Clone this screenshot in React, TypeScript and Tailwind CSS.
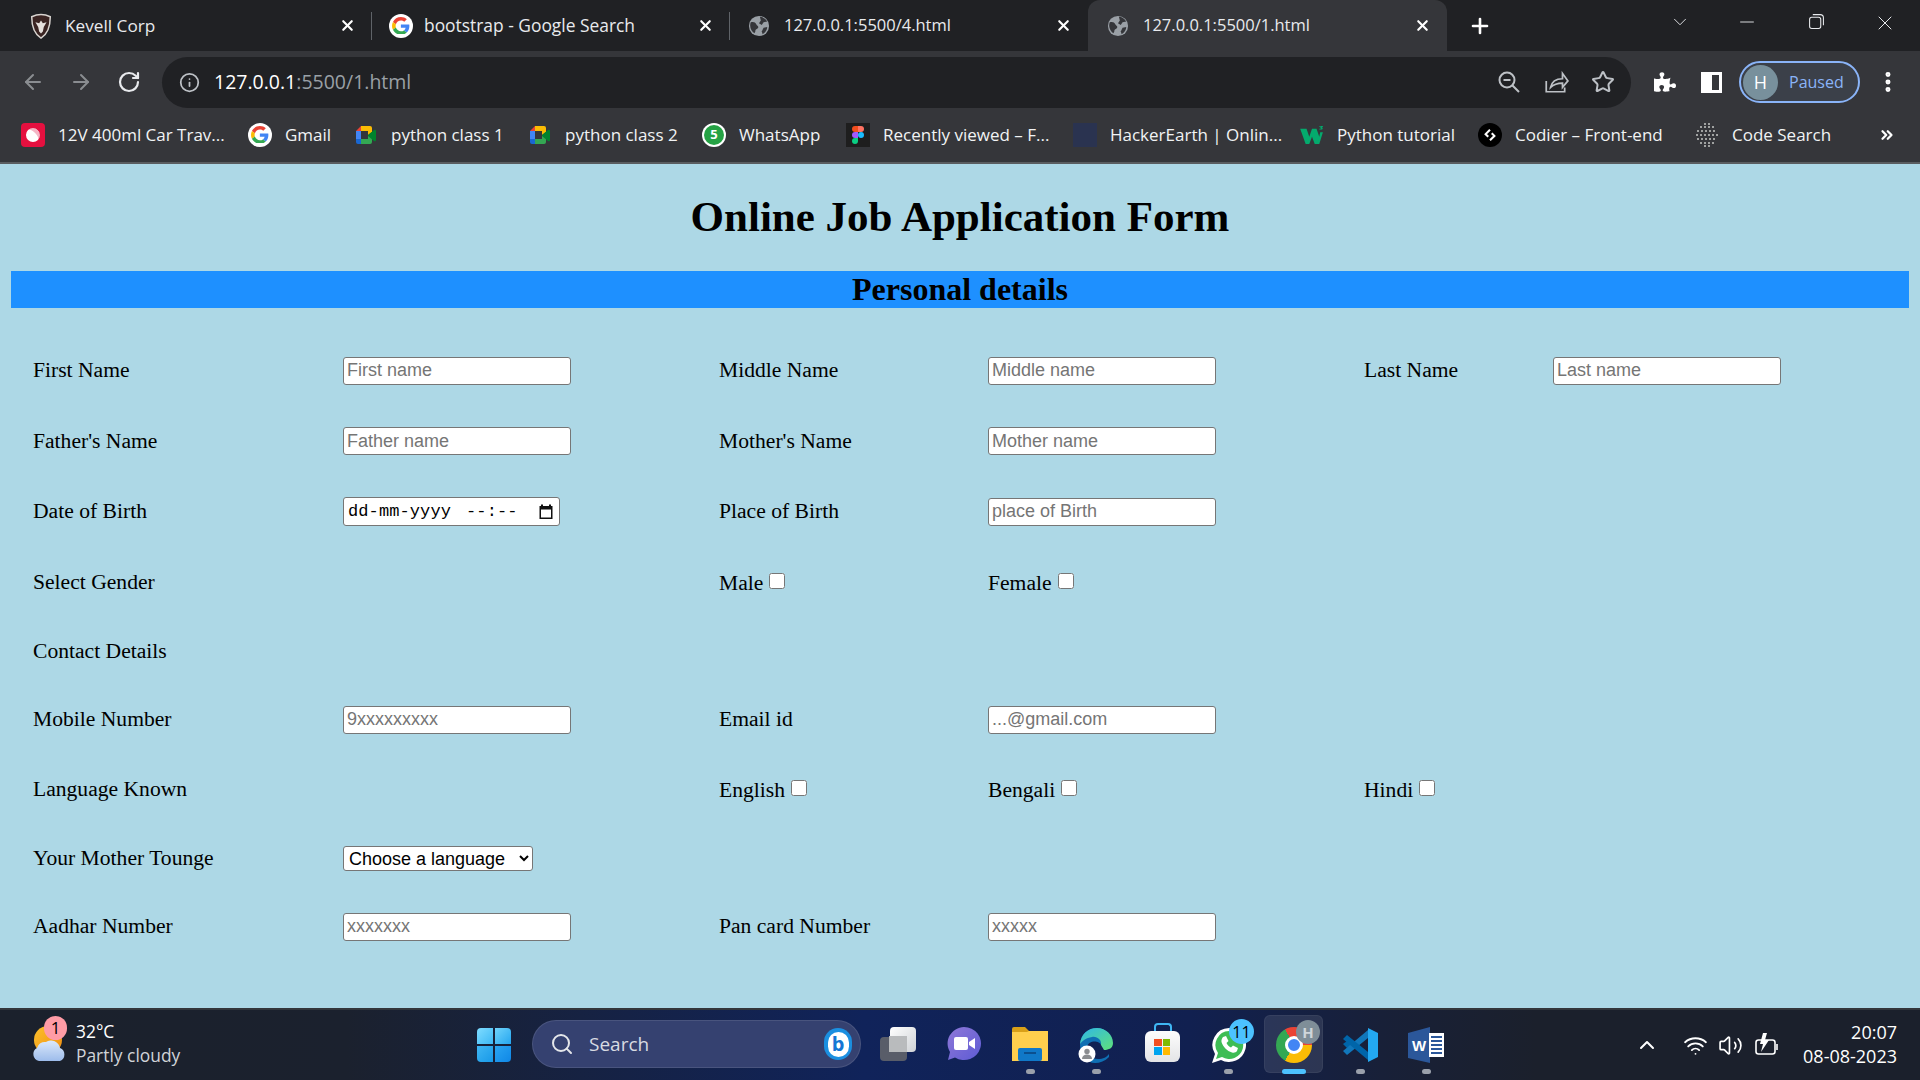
import React from 'react';
import {
  ArrowLeft, ArrowRight, RotateCw, Info, Star, MoreVertical, ChevronUp, ChevronDown,
  ChevronsRight, X, Plus, Minus, Search, Wifi, Volume2,
} from 'lucide-react';
import { FaPuzzlePiece } from 'react-icons/fa';

const Chrome = '[font-family:"Open_Sans","Noto_Sans",sans-serif]';

const GoogleG = ({ size = 24 }: { size?: number }) => (
  <div className="rounded-full bg-white flex items-center justify-center shrink-0" style={{ width: size, height: size }}>
    <svg viewBox="0 0 48 48" width={size * 0.74} height={size * 0.74}>
      <path fill="#EA4335" d="M24 9.5c3.54 0 6.71 1.22 9.21 3.6l6.85-6.85C35.9 2.38 30.47 0 24 0 14.62 0 6.51 5.38 2.56 13.22l7.98 6.19C12.43 13.72 17.74 9.5 24 9.5z" />
      <path fill="#4285F4" d="M46.98 24.55c0-1.57-.15-3.09-.38-4.55H24v9.02h12.94c-.58 2.96-2.26 5.48-4.78 7.18l7.73 6c4.51-4.18 7.09-10.36 7.09-17.65z" />
      <path fill="#FBBC05" d="M10.53 28.59c-.48-1.45-.76-2.99-.76-4.59s.27-3.14.76-4.59l-7.98-6.19C.92 16.46 0 20.12 0 24c0 3.88.92 7.54 2.56 10.78l7.97-6.19z" />
      <path fill="#34A853" d="M24 48c6.48 0 11.93-2.13 15.89-5.81l-7.73-6c-2.15 1.45-4.92 2.3-8.16 2.3-6.26 0-11.57-4.22-13.47-9.91l-7.98 6.19C6.51 42.62 14.62 48 24 48z" />
    </svg>
  </div>
);

const Globe = () => (
  <svg viewBox="0 0 24 24" width="22" height="22" className="shrink-0">
    <circle cx="12" cy="12" r="11" fill="#9aa0a6" />
    <path fill="#35363a" d="M3 8c3-1 5 0 6 2s3 2 2 4-3 1-3 4l-1 2C4 18 1 13 3 8zM13 2c3 0 6 2 8 5l-4 1-2 3-3-2 2-3z" />
    <path fill="#35363a" d="M17 14l4-1c0 3-2 6-5 8l-1-3z" />
  </svg>
);

const KevellLogo = () => (
  <svg viewBox="0 0 24 28" width="24" height="26" className="shrink-0">
    <path fill="#3a2422" stroke="#d8d4d0" strokeWidth="1.6" d="M2 4c6-3 14-3 20 0 0 10-2 18-10 23C4 22 2 14 2 4z" />
    <path fill="#e5e0dc" d="M12 8l2 3 4-1-3 5-1 5-2 2-2-2-1-5-3-5 4 1z" />
  </svg>
);

const MeetIcon = () => (
  <svg viewBox="0 0 24 24" width="24" height="24" className="shrink-0">
    <path fill="#ea4335" d="M7 3L2 8h5z" />
    <path fill="#fbbc04" d="M7 3h9a2 2 0 0 1 2 2v4l-4 3V8H7z" />
    <path fill="#4285f4" d="M2 8h5v8H2z" />
    <path fill="#1967d2" d="M2 16h5v5H4a2 2 0 0 1-2-2z" />
    <path fill="#34a853" d="M7 16h7v-4l4 3v4a2 2 0 0 1-2 2H7z" />
    <path fill="#00832d" d="M14 12l6-5c1-.8 2 0 2 1v9c0 1-1 1.7-2 1l-6-5z" />
  </svg>
);

const FigmaIcon = () => (
  <div className="w-6 h-6 bg-[#1e1e1e] flex items-center justify-center shrink-0">
    <svg viewBox="0 0 12 18" width="12" height="18">
      <path fill="#f24e1e" d="M3 0h3v6H3a3 3 0 0 1 0-6z" />
      <path fill="#ff7262" d="M6 0h3a3 3 0 0 1 0 6H6z" />
      <path fill="#a259ff" d="M3 6h3v6H3a3 3 0 0 1 0-6z" />
      <circle cx="9" cy="9" r="3" fill="#1abcfe" />
      <path fill="#0acf83" d="M3 12h3v3a3 3 0 1 1-3-3z" />
    </svg>
  </div>
);

const W3Icon = () => (
  <svg viewBox="0 0 26 22" width="24" height="20" className="shrink-0">
    <path fill="#04aa6d" d="M0 4h7l3 9 3-9h5l3 9 1-5h3l-4 13h-5l-3-8-3 8H6z" />
    <path fill="#04aa6d" d="M21 1h4v1l-1 1 1 1-1 1h-3v-1h2v-.5h-1v-1h1V2h-2z" />
  </svg>
);

const CodeSearchIcon = () => {
  const dots = [
    [10, 1], [14, 1], [6, 4], [10, 4], [14, 4], [18, 4], [3, 8], [7, 8], [11, 8], [15, 8], [19, 8], [2, 12], [6, 12], [10, 12], [14, 12], [18, 12], [22, 12],
    [3, 16], [7, 16], [11, 16], [15, 16], [19, 16], [6, 20], [10, 20], [14, 20], [18, 20], [10, 23], [14, 23],
  ];
  return (
    <svg viewBox="0 0 24 24" width="24" height="24" className="shrink-0">
      {dots.map(([x, y]) => <circle key={`${x}-${y}`} cx={x} cy={y} r="1" fill="#c4c7c5" />)}
    </svg>
  );
};

const bookmarks: { icon: React.ReactNode; label: string; width: string }[] = [
  {
    icon: (
      <div className="w-6 h-6 rounded bg-[#e5103f] flex items-center justify-center shrink-0">
        <div className="w-3.5 h-3.5 rounded-full bg-white rotate-45 border-t-4 border-t-[#f5b5c5]" />
      </div>
    ),
    label: '12V 400ml Car Trav...',
    width: 'w-[227px]',
  },
  { icon: <GoogleG />, label: 'Gmail', width: 'w-[106px]' },
  { icon: <MeetIcon />, label: 'python class 1', width: 'w-[174px]' },
  { icon: <MeetIcon />, label: 'python class 2', width: 'w-[174px]' },
  {
    icon: (
      <div className="w-6 h-6 rounded-full bg-white flex items-center justify-center shrink-0">
        <div className="w-5 h-5 rounded-full bg-[#25a244] text-white text-[13px] font-bold flex items-center justify-center">5</div>
      </div>
    ),
    label: 'WhatsApp',
    width: 'w-[144px]',
  },
  { icon: <FigmaIcon />, label: 'Recently viewed – F...', width: 'w-[227px]' },
  { icon: <div className="w-6 h-6 bg-[#2a3350] shrink-0" />, label: 'HackerEarth | Onlin...', width: 'w-[227px]' },
  { icon: <W3Icon />, label: 'Python tutorial', width: 'w-[178px]' },
  {
    icon: (
      <div className="w-6 h-6 rounded-full bg-black flex items-center justify-center shrink-0">
        <svg viewBox="0 0 16 16" width="14" height="14"><path fill="none" stroke="#fff" strokeWidth="2.4" d="M8 2L3 7l3 3M8 14l5-5-3-3" /></svg>
      </div>
    ),
    label: 'Codier – Front-end',
    width: 'w-[217px]',
  },
  { icon: <CodeSearchIcon />, label: 'Code Search', width: 'w-[150px]' },
];

const tabs = [
  { icon: <KevellLogo />, label: 'Kevell Corp', cls: 'w-[372px] pl-[29px] gap-[12px] text-[17.2px]' },
  { icon: <GoogleG />, label: 'bootstrap - Google Search', cls: 'w-[358px] pl-[17px] gap-[11px] text-[17.4px]' },
  { icon: <Globe />, label: '127.0.0.1:5500/4.html', cls: 'w-[358px] pl-[18px] gap-[14px] text-[16.5px]' },
];

const TabBar = () => (
  <div className={`h-[51px] bg-[#202124] flex text-[#e8eaed] ${Chrome}`}>
    {tabs.map((t, i) => (
      <div key={t.label} className={`${t.cls} h-full flex items-center relative`}>
        {t.icon}
        <span className="whitespace-nowrap">{t.label}</span>
        <X className="absolute right-[16px] top-[17px] w-[17px] h-[17px] text-white" strokeWidth={3} />
        {i < 2 && <div className="absolute right-0 top-[12px] h-[28px] w-px bg-[#5f6368]" />}
      </div>
    ))}
    <div className="w-[359px] h-full bg-[#35363a] rounded-t-xl flex items-center pl-[19px] gap-[14px] relative text-[16.5px]">
      <Globe />
      <span className="whitespace-nowrap">127.0.0.1:5500/1.html</span>
      <X className="absolute right-[16px] top-[17px] w-[17px] h-[17px] text-white" strokeWidth={3} />
    </div>
    <div className="w-[65px] flex items-center justify-center">
      <Plus className="w-[24px] h-[24px] text-white" strokeWidth={2.6} />
    </div>
    <div className="flex-1 flex items-start justify-end pt-[11px] text-[#e8eaed]">
      <ChevronDown className="w-[22px] h-[22px] mr-[45px]" strokeWidth={1} />
      <Minus className="w-[22px] h-[22px] mr-[50px]" strokeWidth={1} />
      <svg viewBox="0 0 16 16" width="17" height="17" className="mr-[48px] mt-[2px]" fill="none" stroke="currentColor" strokeWidth="1">
        <rect x="1.5" y="4" width="10.5" height="10.5" rx="2" />
        <path d="M4.500 1.500h7a3 3 0 0 1 3 3v7" />
      </svg>
      <X className="w-[24px] h-[24px] mr-[23px]" strokeWidth={1} />
    </div>
  </div>
);

const ToolBar = () => (
  <div className={`h-[58px] pt-[4px] bg-[#35363a] flex items-center ${Chrome}`}>
    <div className="w-[162px] flex items-center pl-[21px] shrink-0">
      <ArrowLeft className="w-[24px] h-[24px] text-[#8a8d91]" strokeWidth={2} />
      <ArrowRight className="w-[24px] h-[24px] ml-[24px] text-[#8a8d91]" strokeWidth={2} />
      <RotateCw className="w-[24px] h-[24px] ml-[24px] text-[#e8eaed]" strokeWidth={2.2} />
    </div>
    <div className="w-[1469px] h-[51px] bg-[#202124] rounded-full flex items-center pl-[17px] shrink-0">
      <Info className="w-[21px] h-[21px] text-[#bdc1c6]" strokeWidth={2} />
      <span className="ml-[14px] text-[19.5px] text-white whitespace-nowrap">
        127.0.0.1<span className="text-[#9aa0a6]">:5500/1.html</span>
      </span>
      <div className="ml-auto flex items-center gap-[22px] pr-[16px] text-[#bdc1c6]">
        <svg viewBox="0 0 24 24" width="24" height="24" fill="none" stroke="currentColor" strokeWidth="2" className="-ml-[1px]">
          <circle cx="10" cy="10" r="7.5" />
          <path d="M6.500 10h7M15.500 15.500L22 22" />
        </svg>
        <svg viewBox="0 0 24 24" width="26" height="26" fill="none" stroke="currentColor" strokeWidth="1.6">
          <path d="M3 11v10h17v-4" />
          <path d="M7 17c1-5 5-8 11-8V4l5 7-5 6v-4c-5 0-8 1-11 4z" />
        </svg>
        <Star className="w-[24px] h-[24px]" strokeWidth={2} />
      </div>
    </div>
    <FaPuzzlePiece className="w-[22px] h-[22px] text-white ml-[23px] shrink-0" />
    <div className="w-[21px] h-[21px] border-[3px] border-white bg-white ml-[25px] shrink-0 flex justify-end">
      <div className="w-[7px] h-full bg-[#35363a]" />
    </div>
    <div className="ml-[17px] w-[121px] h-[42px] rounded-full border-2 border-[#8ab4f8] bg-[#3b4049] flex items-center pl-[2px] shrink-0">
      <div className="w-[35px] h-[35px] rounded-full bg-[#78909c] text-white text-[18px] flex items-center justify-center">H</div>
      <span className="ml-[11px] text-[#8ab4f8] text-[16px]">Paused</span>
    </div>
    <MoreVertical className="w-[26px] h-[26px] text-white ml-[15px] shrink-0" strokeWidth={2.6} />
  </div>
);

const BookmarkBar = () => (
  <div className={`h-[55px] pb-[2px] bg-[#35363a] border-b-2 border-[#5a5d60] flex items-center pl-[21px] text-[#f1f3f4] text-[17px] ${Chrome}`}>
    {bookmarks.map((b) => (
      <div key={b.label} className={`${b.width} shrink-0 flex items-center gap-[13px] whitespace-nowrap`}>
        {b.icon}
        <span>{b.label}</span>
      </div>
    ))}
    <ChevronsRight className="ml-auto mr-[24px] w-[18px] h-[18px] text-white" strokeWidth={3} />
  </div>
);

const Field = ({ placeholder }: { placeholder: string }) => (
  <input
    placeholder={placeholder}
    className="block w-[228px] h-[28px] bg-white border border-[#767676] rounded-[3px] px-[3px] text-[18px] placeholder:text-[#757575] [font-family:'Liberation_Sans',sans-serif]"
  />
);

const DateField = () => (
  <div className="w-[217px] h-[29px] bg-white border border-[#767676] rounded-[3px] pl-[4px] pr-[5px] flex items-center text-[17px] text-black [font-family:'Liberation_Mono',monospace]">
    <span className="tracking-[0.1px]">dd-mm-yyyy</span>
    <span className="ml-[15px] tracking-[0.1px]">--:--</span>
    <svg viewBox="0 0 16 16" width="16" height="17" className="ml-auto">
      <path fill="#111" d="M3 1h2v1.500h6V1h2v1.500h1.500v13h-13v-13H3zM3 6v8h10V6z" />
    </svg>
  </div>
);

const Check = ({ label }: { label: string }) => (
  <label className="flex items-center">
    <span className="pt-[3px]">{label}</span>
    <input type="checkbox" className="w-4 h-4 ml-[6px] -mt-[2px]" />
  </label>
);

const rows: { h: string; cells: React.ReactNode[] }[] = [
  { h: 'h-[71px]', cells: ['First Name', <Field placeholder="First name" />, 'Middle Name', <Field placeholder="Middle name" />, 'Last Name', <Field placeholder="Last name" />] },
  { h: 'h-[70px]', cells: ["Father's Name", <Field placeholder="Father name" />, "Mother's Name", <Field placeholder="Mother name" />] },
  { h: 'h-[71px]', cells: ['Date of Birth', <DateField />, 'Place of Birth', <Field placeholder="place of Birth" />] },
  { h: 'h-[70px]', cells: ['Select Gender', null, <Check label="Male" />, <Check label="Female" />] },
  { h: 'h-[68px]', cells: ['Contact Details'] },
  { h: 'h-[69px]', cells: ['Mobile Number', <Field placeholder="9xxxxxxxxx" />, 'Email id', <Field placeholder="...@gmail.com" />] },
  { h: 'h-[70px]', cells: ['Language Known', null, <Check label="English" />, <Check label="Bengali" />, <Check label="Hindi" />] },
  {
    h: 'h-[68px]',
    cells: [
      'Your Mother Tounge',
      <select className="w-[190px] h-[25px] bg-white border border-[#767676] rounded-[3px] text-[18px] text-black pl-[1px] [font-family:'Liberation_Sans',sans-serif]">
        <option>Choose a language</option>
      </select>,
    ],
  },
  { h: 'h-[69px]', cells: ['Aadhar Number', <Field placeholder="xxxxxxx" />, 'Pan card Number', <Field placeholder="xxxxx" />] },
];

const Form = () => (
  <div className="h-[844px] bg-[#add8e6] text-black [font-family:'Liberation_Serif',serif] overflow-hidden">
    <h1 className="text-center font-bold text-[43px] leading-[52px] pt-[27px]">Online Job Application Form</h1>
    <h2 className="mt-[28px] mx-[11px] h-[37px] bg-[#1e90ff] text-center font-bold text-[32px] leading-[37px]">Personal details</h2>
    <div className="mt-[27px] pl-[33px] text-[21.6px]">
      {rows.map((r, i) => (
        <div key={i} className={`${r.h} grid grid-cols-[310px_376px_269px_376px_189px_1fr] items-center`}>
          {r.cells.map((c, j) => <div key={j}>{c}</div>)}
        </div>
      ))}
    </div>
  </div>
);

const WeatherIcon = () => (
  <div className="relative w-[34px] h-[38px] shrink-0">
    <svg viewBox="0 0 34 38" width="34" height="38">
      <defs>
        <linearGradient id="sun" x1="0" y1="0" x2="1" y2="1"><stop offset="0" stopColor="#fcc12b" /><stop offset="1" stopColor="#ef8d13" /></linearGradient>
        <linearGradient id="cloud" x1="0" y1="0" x2="0" y2="1"><stop offset="0" stopColor="#dce9fb" /><stop offset="1" stopColor="#9dbceb" /></linearGradient>
      </defs>
      <circle cx="17" cy="15" r="14" fill="url(#sun)" />
      <path fill="url(#cloud)" d="M8 36a7 7 0 0 1-2-13 8 8 0 0 1 9-6 9 9 0 0 1 14 6 7 7 0 0 1 0 13z" />
    </svg>
    <div className="absolute left-[13px] -top-[9px] w-[23px] h-[24px] rounded-full bg-[#ff9ca6] text-black text-[17px] flex items-center justify-center">1</div>
  </div>
);

const TaskItem = ({ children, dot, active }: { children: React.ReactNode; dot?: boolean; active?: boolean }) => (
  <div className="w-[66px] h-full relative flex justify-center pt-[17px]">
    {active && <div className="absolute left-[3px] top-[5px] w-[59px] h-[58px] rounded-md bg-white/10 border border-white/5" />}
    <div className="relative">{children}</div>
    {dot && <div className="absolute left-[29px] top-[59px] w-[9px] h-[5px] rounded-full bg-[#9aa0ab]" />}
    {active && <div className="absolute left-[21px] top-[59px] w-[24px] h-[5px] rounded-full bg-[#4cc2ff]" />}
  </div>
);

const Taskbar = () => (
  <div className={`h-[72px] border-t-2 border-[#33363b] flex bg-[linear-gradient(90deg,#1b212c_0%,#1b212e_18%,#10235a_45%,#112050_62%,#182038_72%,#1b202c_80%)] text-white ${Chrome}`}>
    <div className="w-[477px] shrink-0 flex pl-[31px] pt-[15px]">
      <WeatherIcon />
      <div className="ml-[11px] -mt-[6px] text-[17.4px] leading-[24px]">
        <div>32°C</div>
        <div className="text-[#d0d3d8]">Partly cloudy</div>
      </div>
    </div>
    <div className="w-[55px] shrink-0 pt-[18px]">
      <div className="w-[34px] h-[34px] grid grid-cols-2 gap-[2px]">
        <div className="bg-[linear-gradient(135deg,#7fdcff,#3db8f5)] rounded-tl-sm" />
        <div className="bg-[linear-gradient(135deg,#6fd3fb,#25a6f0)] rounded-tr-sm" />
        <div className="bg-[linear-gradient(135deg,#3fb6f3,#1899e8)] rounded-bl-sm" />
        <div className="bg-[linear-gradient(135deg,#2aa5f2,#0f87e6)] rounded-br-sm" />
      </div>
    </div>
    <div className="w-[329px] h-[48px] mt-[10px] shrink-0 rounded-full bg-[#354170] border border-white/10 flex items-center pl-[17px] pr-[8px]">
      <Search className="w-[24px] h-[24px] text-[#e4e6ea]" strokeWidth={2} />
      <span className="ml-[15px] text-[19px] text-[#d8dbe2]">Search</span>
      <div className="ml-auto w-[28px] h-[32px] rounded-full bg-[#1b8fe0] flex items-center justify-center">
        <div className="w-[21px] h-[25px] rounded-full bg-white flex items-center justify-center text-[#1476d4] font-bold text-[20px] leading-none">b</div>
      </div>
    </div>
    <div className="ml-[4px] flex h-full shrink-0">
      <TaskItem>
        <div className="w-[36px] h-[34px] relative">
          <div className="absolute right-0 top-0 w-[26px] h-[25px] rounded-sm bg-[linear-gradient(135deg,#fff,#cfd2d6)]" />
          <div className="absolute left-0 bottom-0 w-[27px] h-[24px] rounded-sm bg-[#62646a]/90" />
          <div className="absolute left-[9px] top-[9px] w-[18px] h-[16px] bg-[#b9bbbd]" />
        </div>
      </TaskItem>
      <TaskItem>
        <svg viewBox="0 0 34 34" width="34" height="34">
          <defs><linearGradient id="meet" x1="0" y1="0" x2="1" y2="1"><stop offset="0" stopColor="#8f78d8" /><stop offset="1" stopColor="#5d5bd4" /></linearGradient></defs>
          <path fill="url(#meet)" d="M17 0a17 16.5 0 1 1-9 30.5L1 33l2-8A17 16.5 0 0 1 17 0z" />
          <rect x="7" y="10" width="14" height="13" rx="2" fill="#fff" />
          <path fill="#fff" d="M22 15l6-4v11l-6-4z" />
        </svg>
      </TaskItem>
      <TaskItem dot>
        <svg viewBox="0 0 36 34" width="36" height="34">
          <path fill="#d9a018" d="M0 2a2 2 0 0 1 2-2h11l4 4h19v6H0z" />
          <path fill="#ffcf4d" d="M0 5h15l2-1h19v30H0z" />
          <rect x="6" y="21" width="24" height="13" rx="2" fill="#1078c8" />
          <rect x="12" y="25" width="12" height="2" fill="#0b4f8f" />
        </svg>
      </TaskItem>
      <TaskItem dot>
        <svg viewBox="0 0 36 36" width="36" height="36">
          <defs>
            <linearGradient id="edge1" x1="0" y1="0" x2="1" y2="1"><stop offset="0" stopColor="#2fb7e8" /><stop offset="1" stopColor="#5fe07a" /></linearGradient>
          </defs>
          <path fill="#0f6fb3" d="M2 18C2 8 10 1 19 1c6 0 12 4 14 9l-10 8c-1-4-12-6-14 2-1 6 4 12 11 12 5 0 9-2 11-5v3c-4 4-9 6-14 6C9 36 2 28 2 18z" />
          <path fill="url(#edge1)" d="M2 17C3 7 10 1 19 1c9 0 16 7 16 15 0 5-4 7-9 7l-3-5c1-5-4-9-9-8-6 1-10 4-12 7z" />
          <circle cx="9" cy="27" r="8.5" fill="#fff" />
          <circle cx="9" cy="24.5" r="2.7" fill="#8b8d90" />
          <path fill="#8b8d90" d="M4 32c0-3 2-4.500 5-4.500s5 1.500 5 4.500z" />
        </svg>
      </TaskItem>
      <TaskItem>
        <div className="relative w-[35px] h-[35px]">
          <div className="absolute left-[9px] -top-[4px] w-[18px] h-[12px] border-2 border-b-0 border-[#3fb6f3] rounded-t-sm" />
          <div className="absolute left-0 top-[4px] w-[35px] h-[31px] rounded-md bg-[linear-gradient(#fdfdfd,#e3e4e6)] flex items-center justify-center">
            <div className="grid grid-cols-2 gap-px w-[16px] h-[16px]">
              <div className="bg-[#f25022]" /><div className="bg-[#7fba00]" /><div className="bg-[#00a4ef]" /><div className="bg-[#ffb900]" />
            </div>
          </div>
        </div>
      </TaskItem>
      <TaskItem dot>
        <div className="relative w-[36px] h-[36px]">
          <svg viewBox="0 0 36 36" width="36" height="36">
            <path fill="#fff" d="M19 1a17 17 0 1 1-8 32l-9 3 3-9A17 17 0 0 1 19 1z" />
            <path fill="#3ebd54" d="M19 4a14 14 0 1 1-7 26l-6 2 2-6A14 14 0 0 1 19 4z" />
            <path fill="#fff" d="M13 10l3-1 2.500 5-2 2c1 2 2.500 3.500 4.500 4.500l2-2 5 2.500-1 3c-1 1.500-3 2-5 1.500-5-1.500-9-5.500-10.500-10.500-.3-2 .5-4 1.500-5z" />
          </svg>
          <div className="absolute left-[19px] -top-[8px] w-[25px] h-[25px] rounded-full bg-[#4cc2ff] text-black text-[16px] flex items-center justify-center">11</div>
        </div>
      </TaskItem>
      <TaskItem active>
        <div className="relative w-[36px] h-[36px]">
          <div className="w-[36px] h-[36px] rounded-full bg-[conic-gradient(from_-30deg,#ea4335_0_120deg,#fbbc04_120deg_240deg,#34a853_240deg_360deg)] flex items-center justify-center">
            <div className="w-[18px] h-[18px] rounded-full bg-[#4285f4] border-[3px] border-white" />
          </div>
          <div className="absolute left-[20px] -top-[7px] w-[24px] h-[24px] rounded-full bg-[#7f8e98] text-[#cfd6da] text-[15px] font-bold flex items-center justify-center">H</div>
        </div>
      </TaskItem>
      <TaskItem dot>
        <svg viewBox="0 0 36 36" width="36" height="36">
          <path fill="#0065a9" d="M5 14l-4 3 4 4 5-3z" />
          <path fill="#1177bb" d="M1 24l4 4 21-17V3z" />
          <path fill="#0065a9" d="M1 12l4-4 21 17v8z" />
          <path fill="#23a9f2" d="M26 1l10 5v24l-10 5z" />
        </svg>
      </TaskItem>
      <TaskItem dot>
        <svg viewBox="0 0 36 36" width="36" height="36">
          <path fill="#2b579a" d="M0 6L22 0v36L0 31z" />
          <rect x="21" y="6" width="15" height="24" fill="#fff" />
          <path stroke="#2b579a" strokeWidth="2" d="M23 10h11M23 14h11M23 18h11M23 22h11M23 26h11" />
          <text x="4" y="24" fill="#fff" fontSize="15" fontWeight="700" fontFamily="Liberation Sans">W</text>
        </svg>
      </TaskItem>
    </div>
    <div className="ml-auto flex items-center pr-[23px] shrink-0 text-white">
      <ChevronUp className="w-[24px] h-[24px]" strokeWidth={2} />
      <Wifi className="w-[25px] h-[25px] ml-[24px]" strokeWidth={1.8} />
      <Volume2 className="w-[25px] h-[25px] ml-[10px]" strokeWidth={1.6} />
      <svg viewBox="0 0 26 26" width="26" height="26" className="ml-[11px]" fill="none" stroke="currentColor" strokeWidth="1.6">
        <rect x="2" y="8" width="19" height="14" rx="2.5" />
        <path d="M23 12v6" />
        <path fill="currentColor" stroke="none" d="M9 1l-3 11h3l-2 8 8-12h-4l2-7z" />
      </svg>
      <div className="ml-[23px] -mt-[2px] text-right text-[18px] leading-[24px]">
        <div>20:07</div>
        <div>08-08-2023</div>
      </div>
    </div>
  </div>
);

export default function App() {
  return (
    <div className="w-[1920px] h-[1080px] overflow-hidden flex flex-col">
      <TabBar />
      <ToolBar />
      <BookmarkBar />
      <Form />
      <Taskbar />
    </div>
  );
}
